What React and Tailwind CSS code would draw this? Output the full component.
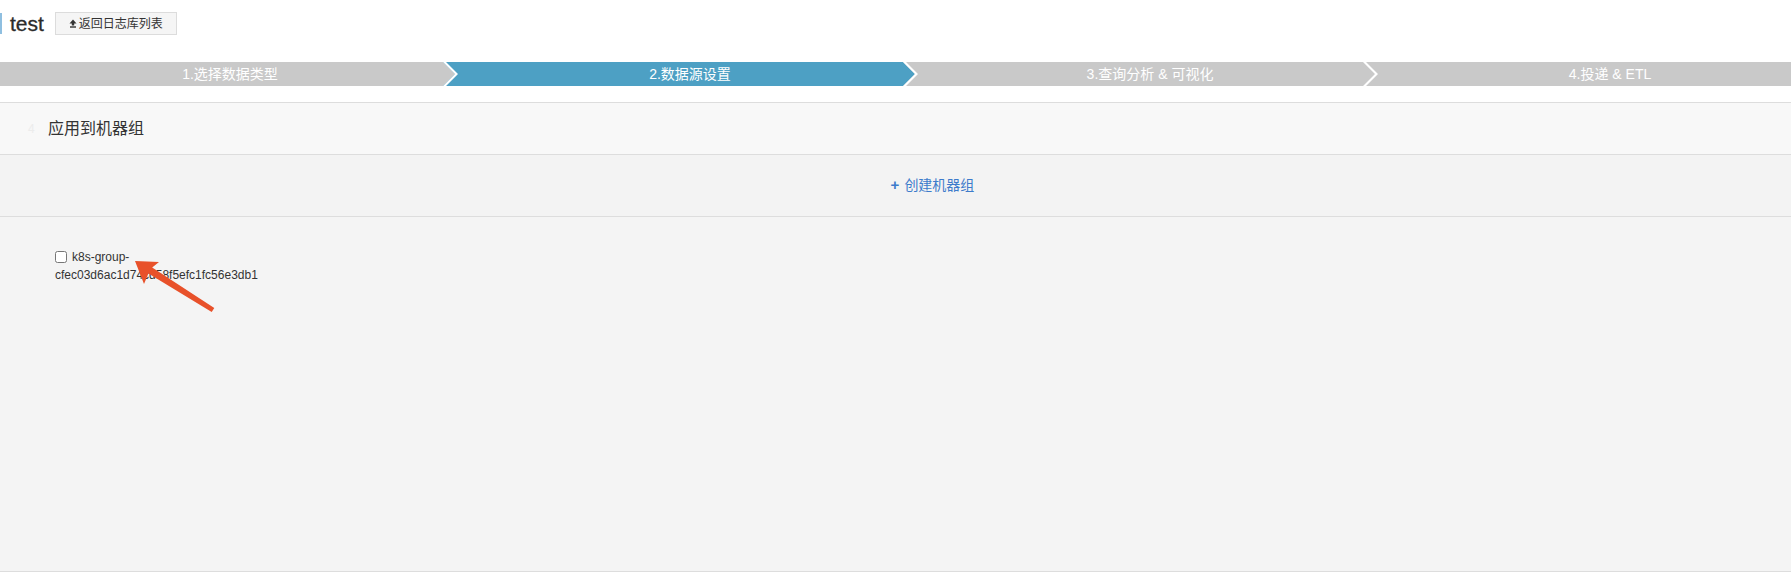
const steps = [
  { label: "1.选择数据类型", active: false },
  { label: "2.数据源设置", active: true },
  { label: "3.查询分析 & 可视化", active: false },
  { label: "4.投递 & ETL", active: false },
];

const GRAY = "#c9c9c9";
const BLUE = "#4da0c4";

function Chevron({ from, to }) {
  // white arrow separator between two steps
  return (
    <svg className="absolute right-0 top-0 z-10" width="17" height="24" viewBox="0 0 17 24">
      <rect x="0" y="0" width="17" height="24" fill={to} />
      <polygon points="0,0 12,12 0,24" fill={from} />
      <polygon points="0,0 3,0 15,12 3,24 0,24 12,12" fill="#fff" />
    </svg>
  );
}

function StepBar() {
  return (
    <div className="flex h-[24px] overflow-hidden">
      {steps.map((s, i) => {
        const bg = s.active ? BLUE : GRAY;
        const next = steps[i + 1];
        return (
          <div
            key={s.label}
            className={`relative flex h-full w-[460px] shrink-0 items-center justify-center text-[14px] text-white ${
              s.active ? "bg-[#4da0c4]" : "bg-[#c9c9c9]"
            }`}
          >
            <span>{s.label}</span>
            {next && <Chevron from={bg} to={next.active ? BLUE : GRAY} />}
          </div>
        );
      })}
    </div>
  );
}

export default function App() {
  return (
    <div
      className="min-h-[575px] bg-white text-[#333]"
      style={{ fontFamily: '"Liberation Sans", "Noto Sans CJK SC", sans-serif' }}
    >
      {/* title row */}
      <div className="flex h-[62px] items-start pt-[12px]">
        <div className="flex h-[23px] items-center">
          <div className="h-[21px] w-[2px] bg-[#8fbfe0]" />
          <span className="ml-[8px] text-[21px] leading-none text-[#2b2b2b] [-webkit-text-stroke:0.3px_#2b2b2b]">test</span>
          <button className="ml-[11px] flex h-[23px] w-[122px] items-center justify-center gap-[2px] border border-[#dcdcdc] bg-[#f5f5f5] text-[12px] text-[#333]">
            <svg width="8" height="9" viewBox="0 0 8 9">
              <path d="M4 0.5 L7.5 4.5 L5.2 4.5 L5.2 6.5 L2.8 6.5 L2.8 4.5 L0.5 4.5 Z" fill="#333" />
              <rect x="1" y="7.3" width="6" height="1.4" fill="#333" />
            </svg>
            返回日志库列表
          </button>
        </div>
      </div>

      <StepBar />

      {/* section */}
      <div className="mt-[16px] border-t border-[#dddddd]">
        <div className="flex h-[52px] items-center border-b border-[#dddddd] bg-[#f8f8f8]">
          <span className="ml-[28px] w-[20px] text-[12px] text-[#ececec]">4</span>
          <span className="text-[16px] text-[#333]">应用到机器组</span>
        </div>
        <div className="flex h-[62px] items-center justify-center border-b border-[#dddddd] bg-[#f3f3f3] pl-[74px]">
          <a className="flex items-center gap-[5px] text-[14px] text-[#3d7bcb]" href="#">
            <span className="text-[15px] font-bold">+</span>
            创建机器组
          </a>
        </div>
        <div className="relative h-[355px] border-b border-[#dddddd] bg-[#f4f4f4] pl-[55px] pt-[31px]">
          <label className="block w-[215px] text-[12px] leading-[18px] text-[#333]">
            <input type="checkbox" className="mr-[5px] h-[12px] w-[12px] align-[-2px]" />
            k8s-group-cfec03d6ac1d74cd58f5efc1fc56e3db1
          </label>
          {/* annotation arrow */}
          <svg className="absolute left-[125px] top-[38px]" width="100" height="65" viewBox="0 0 100 65">
            <polygon
              points="10,6 34,7 27.2,12.5 89.3,52.9 86.7,57.1 23.4,18.5 19,29"
              fill="#e8512a"
            />
          </svg>
        </div>
      </div>
    </div>
  );
}
